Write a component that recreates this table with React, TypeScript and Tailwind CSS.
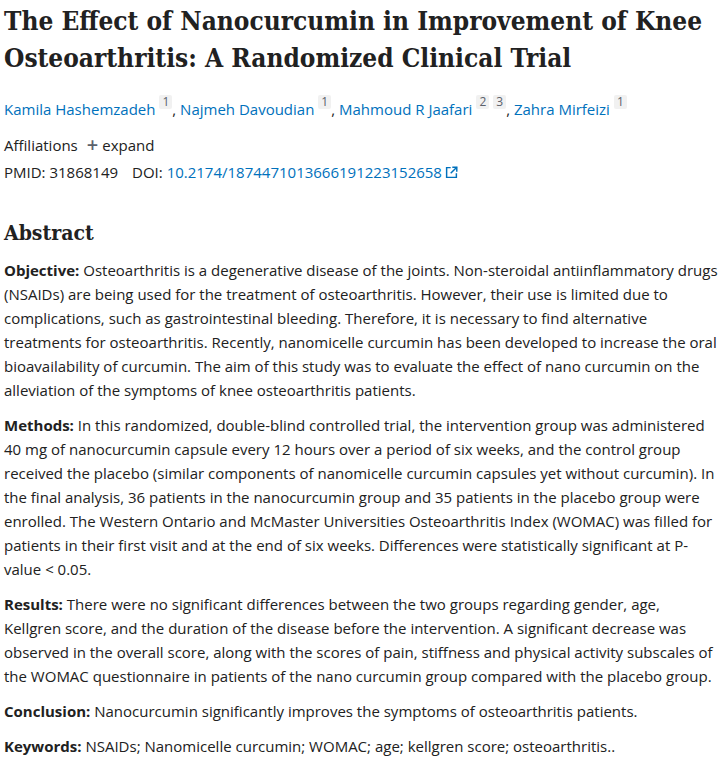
import React from "react";

const serif = { fontFamily: '"DejaVu Serif Condensed", "DejaVu Serif", "Liberation Serif", serif' };

const Sup = ({ n }: { n: string }) => (
  <sup className="ml-1 inline-block rounded-[2px] bg-[#f1f1f1] px-[3px] align-[3px] text-[12px] leading-[14px] text-[#5b616b]">
    {n}
  </sup>
);

const Author = ({ name, refs, last }: { name: string; refs: string[]; last?: boolean }) => (
  <span>
    <a className="text-[#0071bc]">{name}</a>
    {refs.map((r) => (
      <Sup key={r} n={r} />
    ))}
    {!last && <span>, </span>}
  </span>
);

const ExternalIcon = () => (
  <svg viewBox="0 0 16 16" className="ml-[3px] inline-block h-[13px] w-[13px] align-[-1px]" fill="none" stroke="#0071bc" strokeWidth="1.8">
    <path d="M7 2H2v12h12V9" />
    <path d="M9 1.5h5.5V7" />
    <path d="M14.5 1.5L7 9" />
  </svg>
);

export default function App() {
  return (
    <div className="min-h-screen bg-white px-1 text-[#212121]" style={{ fontFamily: '"Open Sans", "Liberation Sans", sans-serif' }}>
      <h1 className="font-stretch-condensed pt-[3px] text-[26px] font-bold leading-[37px] text-[#212121]" style={serif}>
        The Effect of Nanocurcumin in Improvement of Knee Osteoarthritis: A Randomized Clinical Trial
      </h1>

      <div className="mt-[20px] text-[15px] leading-[24px]">
        <Author name="Kamila Hashemzadeh" refs={["1"]} />
        <Author name="Najmeh Davoudian" refs={["1"]} />
        <Author name="Mahmoud R Jaafari" refs={["2", "3"]} />
        <Author name="Zahra Mirfeizi" refs={["1"]} last />
      </div>

      <div className="mt-[12px] flex items-center text-[15px] leading-[24px]">
        <span>Affiliations</span>
        <span className="ml-[9px] flex items-center text-[#5b616b]">
          <span className="mr-[4px] text-[20px] leading-none font-semibold">+</span>
          <span className="text-[#212121]">expand</span>
        </span>
      </div>

      <div className="mt-[3px] text-[15px] leading-[24px]">
        <span>PMID: 31868149</span>
        <span className="ml-[14px]">DOI: </span>
        <a className="text-[#0071bc]">10.2174/1874471013666191223152658</a>
        <ExternalIcon />
      </div>

      <h2 className="font-stretch-condensed mt-[34px] text-[21px] font-bold leading-[30px]" style={serif}>
        Abstract
      </h2>

      <div className="mt-[10px] space-y-[11px] text-[15px] leading-[24px]">
        <p>
          <strong>Objective:</strong> Osteoarthritis is a degenerative disease of the joints. Non-steroidal antiinflammatory drugs<br />
          (NSAIDs) are being used for the treatment of osteoarthritis. However, their use is limited due to<br />
          complications, such as gastrointestinal bleeding. Therefore, it is necessary to find alternative<br />
          treatments for osteoarthritis. Recently, nanomicelle curcumin has been developed to increase the oral<br />
          bioavailability of curcumin. The aim of this study was to evaluate the effect of nano curcumin on the<br />
          alleviation of the symptoms of knee osteoarthritis patients.
        </p>
        <p>
          <strong>Methods:</strong> In this randomized, double-blind controlled trial, the intervention group was administered<br />
          40 mg of nanocurcumin capsule every 12 hours over a period of six weeks, and the control group<br />
          received the placebo (similar components of nanomicelle curcumin capsules yet without curcumin). In<br />
          the final analysis, 36 patients in the nanocurcumin group and 35 patients in the placebo group were<br />
          enrolled. The Western Ontario and McMaster Universities Osteoarthritis Index (WOMAC) was filled for<br />
          patients in their first visit and at the end of six weeks. Differences were statistically significant at P-<br />
          value &lt; 0.05.
        </p>
        <p>
          <strong>Results:</strong> There were no significant differences between the two groups regarding gender, age,<br />
          Kellgren score, and the duration of the disease before the intervention. A significant decrease was<br />
          observed in the overall score, along with the scores of pain, stiffness and physical activity subscales of<br />
          the WOMAC questionnaire in patients of the nano curcumin group compared with the placebo group.
        </p>
        <p>
          <strong>Conclusion:</strong> Nanocurcumin significantly improves the symptoms of osteoarthritis patients.
        </p>
        <p>
          <strong>Keywords:</strong> NSAIDs; Nanomicelle curcumin; WOMAC; age; kellgren score; osteoarthritis..
        </p>
      </div>
    </div>
  );
}
